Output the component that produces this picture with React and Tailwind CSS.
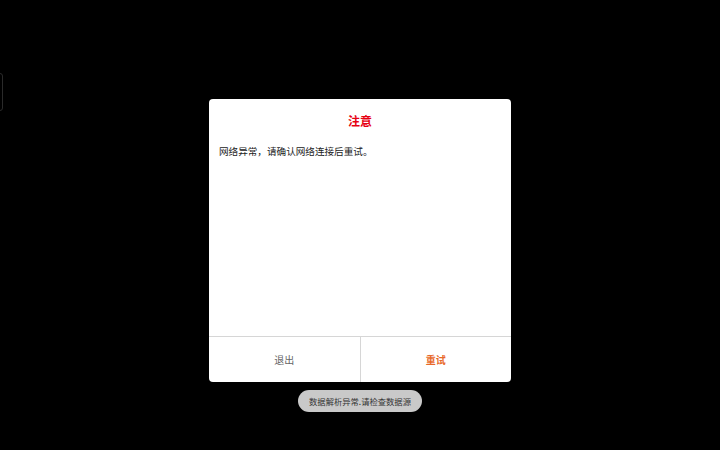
export default function App() {
  return (
    <div
      className="relative w-[720px] h-[450px] bg-black overflow-hidden flex flex-col items-center pt-[99px]"
      style={{ fontFamily: '"Noto Sans CJK SC", "Noto Sans", sans-serif' }}
    >
      {/* faint edge of something behind, cut off on the left */}
      <div className="absolute left-[-20px] top-[73px] w-[23px] h-[38px] rounded-[3px] border border-[#2a2a2a]" />

      {/* dialog */}
      <div className="w-[302px] h-[283px] bg-white rounded-[4px] flex flex-col overflow-hidden">
        <div className="pt-[15px] text-center text-[12px] leading-[14px] font-bold text-[#e60012]">注意</div>
        <p className="mt-[16px] px-[10px] text-[9.6px] leading-[14px] text-[#222]">网络异常，请确认网络连接后重试。</p>
        <div className="flex-1" />
        <div className="h-[46px] flex border-t border-[#d6d6d6]">
          <button className="flex-1 text-[10px] text-[#666] border-r border-[#d6d6d6]">退出</button>
          <button className="flex-1 text-[10px] font-bold text-[#e8692a]">重试</button>
        </div>
      </div>

      {/* toast */}
      <div className="mt-[8px] w-[124px] h-[22px] rounded-full bg-[#c9c9c9] flex items-center justify-center text-[8.3px] text-[#333]">
        数据解析异常.请检查数据源
      </div>
    </div>
  )
}
